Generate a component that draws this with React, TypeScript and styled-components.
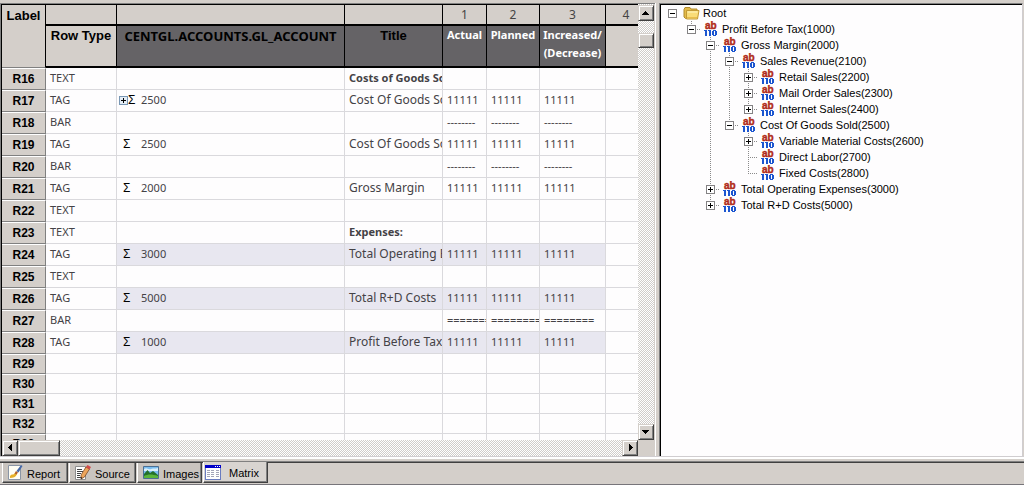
import React from "react";
import styled, { createGlobalStyle, css } from "styled-components";

const face = "#d4cfca";
const sans = '"Liberation Sans", Arial, sans-serif';
const noto = '"Noto Sans", "Open Sans", sans-serif';

const GlobalStyle = createGlobalStyle`
  *, *::before, *::after { box-sizing: border-box; }
  body { margin: 0; background: ${face}; font-family: ${sans}; font-size: 11px; color: #000; }
  button { font: inherit; color: inherit; margin: 0; padding: 0; border-radius: 0; }
`;

const Page = styled.div`
  display: flex;
  flex-direction: column;
  height: 100vh;
  padding-top: 3px;
  background: ${face};
`;

const Work = styled.main`
  flex: 1;
  min-height: 0;
  display: grid;
  grid-template-columns: minmax(0, 655fr) minmax(0, 369fr);
  grid-template-rows: minmax(0, 1fr);
`;

const GridPane = styled.section`
  display: grid;
  grid-template-columns: minmax(0, 1fr) 17px;
  grid-template-rows: minmax(0, 1fr) 16px;
  border-left: 1px solid #808080;
  border-top: 1px solid #808080;
`;

const GridView = styled.div`
  overflow: hidden;
  border-left: 1px solid #000;
  border-top: 1px solid #000;
  background: #fefdfe;
`;

const Table = styled.table`
  table-layout: fixed;
  width: 100%;
  min-width: 645px;
  border-collapse: separate;
  border-spacing: 0;
`;

const Col = styled.col<{ $w?: number }>`
  width: ${(p) => (p.$w ? `${p.$w}px` : "auto")};
`;

const headBase = css`
  padding: 0;
  overflow: hidden;
  white-space: nowrap;
  vertical-align: top;
  border-right: 1px solid #000;
  border-bottom: 2px solid #000;
  background: ${face};
`;

const ColNumber = styled.th`
  ${headBase}
  height: 21px;
  vertical-align: middle;
  font: 400 12px/16px ${noto};
  color: #444;
`;

const CornerHead = styled.th`
  ${headBase}
  height: 63px;
  border-bottom: 1px solid #808080;
  padding-top: 2px;
  font: 700 13px/18px ${sans};
`;

const FieldHead = styled.th<{ $dark?: boolean; $light?: boolean; $noto?: boolean }>`
  ${headBase}
  height: 42px;
  padding-top: ${(p) => (p.$light ? 0 : 1)}px;
  font: 700 ${(p) => (p.$light ? 11 : 13)}px/18px ${(p) => (p.$light || p.$noto ? noto : sans)};
  color: ${(p) => (p.$light ? "#fff" : "#000")};
  background: ${(p) => (p.$dark ? "#656366" : face)};
  white-space: pre-line;
`;

const RowHead = styled.th`
  padding: 0 0 1px;
  border: 1px solid #808080;
  border-top-color: #fff;
  border-left: 0;
  background: ${face};
  font: 700 12px/16px ${sans};
`;

const Cell = styled.td<{ $shade?: boolean; $bold?: boolean; $size?: number }>`
  padding: 0 0 1px 4px;
  border-right: 1px solid #dad9dd;
  border-bottom: 1px solid #dad9dd;
  background: ${(p) => (p.$shade ? "#e8e7f0" : "#fefdfe")};
  font: ${(p) => (p.$bold ? 700 : 400)} ${(p) => p.$size ?? 11}px/16px ${noto};
  color: #444246;
  white-space: nowrap;
  overflow: hidden;
`;

const Row = styled.tr<{ $empty: boolean }>`
  height: ${(p) => (p.$empty ? 20 : 22)}px;
`;

const Account = styled.div`
  display: flex;
  align-items: center;
`;

const AccountIcons = styled.span<{ $plus?: boolean }>`
  display: flex;
  align-items: center;
  flex: none;
  width: ${(p) => (p.$plus ? 22 : 20)}px;
  margin-left: ${(p) => (p.$plus ? -2 : 0)}px;
  padding-left: ${(p) => (p.$plus ? 0 : 2)}px;
`;

const Expander = styled.button`
  display: flex;
  width: 9px;
  height: 9px;
  border: 0;
  background: none;
  flex: none;
`;

const Sigma = styled.span`
  font: 400 12px/16px ${sans};
  color: #000;
`;

const checker = css`
  background: repeating-conic-gradient(#d0cdca 0 25%, #fff 0 50%) 0 0 / 2px 2px;
`;

const VBar = styled.div`
  display: flex;
  flex-direction: column;
  min-height: 0;
  padding-top: 1px;
  border-right: 1px solid ${face};
  ${checker}
`;

const HBar = styled.div`
  display: flex;
  border-left: 1px solid #000;
  ${checker}
`;

const bevel = css`
  border: 1px solid;
  border-color: ${face} #404040 #404040 ${face};
  box-shadow: inset 1px 1px #fff, inset -1px -1px #808080;
  background: ${face};
`;

const ArrowButton = styled.button`
  ${bevel}
  width: 16px;
  height: 16px;
  flex: none;
  display: flex;
  align-items: center;
  justify-content: center;
`;

const Thumb = styled.div<{ $w: number; $h: number }>`
  ${bevel}
  width: ${(p) => p.$w}px;
  height: ${(p) => p.$h}px;
  flex: none;
`;

const Gap = styled.div<{ $size?: number }>`
  flex: ${(p) => (p.$size ? `0 0 ${p.$size}px` : "1")};
`;

const TreePane = styled.aside`
  display: flex;
  min-width: 0;
  border-left: 1px solid #fff;
  padding-left: 3px;
  padding-right: 1px;
`;

const TreeView = styled.ul`
  flex: 1;
  min-width: 0;
  overflow: hidden;
  margin: 0;
  padding: 1px 0 0 3px;
  list-style: none;
  border-left: 1px solid #808080;
  border-top: 1px solid #808080;
  border-right: 1px solid #d0cdd0;
  box-shadow: inset 1px 1px #000;
  background: #fefdfe;
`;

const TreeRow = styled.li`
  display: flex;
  height: 16px;
  line-height: 16px;
  white-space: nowrap;
`;

const dotsV = "repeating-linear-gradient(#8a8a8a 0 1px, transparent 1px 2px)";
const dotsH = "repeating-linear-gradient(90deg, #8a8a8a 0 1px, transparent 1px 2px)";

const Guide = styled.span<{ $on?: boolean }>`
  width: 19px;
  flex: none;
  background: ${(p) => (p.$on ? `${dotsV} 9px 0 / 1px 100% no-repeat` : "none")};
`;

const ToggleCell = styled.span<{ $root?: boolean; $last?: boolean }>`
  width: 19px;
  flex: none;
  display: flex;
  align-items: center;
  justify-content: center;
  ${(p) =>
    !p.$root &&
    css`
      background: ${dotsV} 9px 0 / 1px ${p.$last ? "8px" : "100%"} no-repeat,
        ${dotsH} 9px 8px / 10px 1px no-repeat;
    `}
`;

const Toggle = styled.button`
  display: flex;
  width: 9px;
  height: 9px;
  border: 0;
  background: #fff;
`;

const NodeIcon = styled.span`
  width: 19px;
  flex: none;
  display: flex;
  justify-content: center;
  align-items: center;
`;

const NodeLabel = styled.span`
  padding-left: 2px;
`;

const Seam = styled.div`
  height: 7px;
  flex: none;
  border-top: 1px solid #d0cdd0;
  border-bottom: 1px solid #404040;
  background: linear-gradient(#fff 0 2px, ${face} 2px 4px, #808080 4px 5px);
`;

const TabStrip = styled.nav`
  display: flex;
  flex: none;
  height: 22px;
  padding: 0 0 1px 2px;
  border-bottom: 1px solid #77757a;
`;

const Tab = styled.button<{ $active?: boolean; $w: number }>`
  display: flex;
  align-items: center;
  gap: 4px;
  width: ${(p) => p.$w}px;
  height: ${(p) => (p.$active ? 21 : 20)}px;
  margin-top: ${(p) => (p.$active ? -1 : 0)}px;
  margin-right: ${(p) => (p.$active ? 0 : 1)}px;
  padding-left: ${(p) => (p.$active ? 1 : 5)}px;
  border: 0;
  border-left: 1px solid #fff;
  border-right: 1px solid #404040;
  border-bottom: 1px solid #404040;
  box-shadow: inset -1px -1px #808080;
  background: ${(p) => (p.$active ? "#d8d4d0" : "#c9c4bf")};
  white-space: nowrap;
`;

const TabText = styled.span<{ $pad?: boolean }>`
  padding-left: ${(p) => (p.$pad ? 4 : 0)}px;
  padding-top: 2px;
`;

const Arrow = ({ d }: { d: string }) => (
  <svg width="8" height="8" viewBox="0 0 8 8" shapeRendering="crispEdges">
    <path d={d} fill="#000" />
  </svg>
);
const arrows = {
  up: "M3 2h1v1h1v1h1v1h1v1H0V5h1V4h1V3h1z",
  down: "M0 2h7v1H6v1H5v1H4v1H3V5H2V4H1V3H0z",
  left: "M2 3h1V2h1V1h1V0h1v7H5V6H4V5H3V4H2z",
  right: "M3 0h1v1h1v1h1v1h1v1H6v1H5v1H4v1H3z",
};

const PlusMinus = ({ plus, blue }: { plus?: boolean; blue?: boolean }) => (
  <svg width="9" height="9" viewBox="0 0 9 9" shapeRendering="crispEdges">
    <rect x="0.5" y="0.5" width="8" height="8" fill={blue ? "#e4edf6" : "#fff"} stroke={blue ? "#7896b4" : "#848284"} />
    <path d={plus ? "M2 4h5v1H2zM4 2h1v5H4z" : "M2 4h5v1H2z"} fill="#000" />
  </svg>
);

const FolderIcon = () => (
  <svg width="17" height="14" viewBox="0 0 17 14">
    <path d="M1 3.5 2 1.5h5l1 1.500h6v9.500H2.500L1 11z" fill="#e3ba48" stroke="#b08a2c" />
    <path d="M3.500 4.500h12.500L14.500 13h-11z" fill="#f9dc78" stroke="#c39a36" />
    <path d="M4.500 6h10" stroke="#fff6c4" />
    <path d="M4 11.500h10" stroke="#e9bd4c" />
  </svg>
);

const FieldIcon = () => (
  <svg width="13" height="16" viewBox="0 0 13 16" fontFamily="Liberation Sans, Arial, sans-serif" fontWeight="700">
    <text x="1" y="8" fontSize="10" fill="#b02a18" stroke="#b02a18" strokeWidth="0.4">ab</text>
    <g fill="#1c56d0" shapeRendering="crispEdges">
      <path d="M0 9h3v6H1v-5H0zM4 9h3v6H5v-5H4z" />
      <path fillRule="evenodd" d="M9 9h3v1h1v4h-1v1H9v-1H8v-4h1zM10 10v4h1v-4z" />
    </g>
  </svg>
);

const ReportIcon = () => (
  <svg width="15" height="15" viewBox="0 0 15 15">
    <path d="M0.500 0.500h12v14H0.500z" fill="#fffef4" stroke="#8a95a5" />
    <path d="M2 11c2-3 3 0 5-3l2 1c-1 3-4 4-7 4z" fill="#e6b029" />
    <path d="M6.500 8.500 8 6l2 1.500-1.500 2z" fill="#b45f25" />
    <path d="M8.500 6 13 0l1.500 1-4 6.500z" fill="#4568a8" />
  </svg>
);

const SourceIcon = () => (
  <svg width="16" height="15" viewBox="0 0 16 15">
    <path d="M0.500 1.500h10v13h-10z" fill="#fff" stroke="#8d8d8d" />
    <path d="M2 4.500h5M2 6.500h6M2 8.500h4M2 10.500h3M2 12.500h4" stroke="#444" />
    <path d="M6 14V10l5-8 3.500 2-5 8z" fill="#eda55b" stroke="#7c4b2a" strokeWidth="0.8" />
    <path d="m11 2 1.500-2 3.500 2-1.500 2.500z" fill="#d24848" />
    <path d="M6 14v-2l1.500 1z" fill="#222" />
  </svg>
);

const ImagesIcon = () => (
  <svg width="16" height="13" viewBox="0 0 16 13">
    <path d="M0.500 0.500h15v12h-15z" fill="#79bdf0" stroke="#4b6f92" />
    <path d="M1 3c3-2 4 1 7 0s4 0 7-1v3H1z" fill="#d9effb" />
    <path d="M1 8 4.500 4 7 7l3-2 5 4v3H1z" fill="#23702c" />
    <path d="M1 10c4-2 8-2 14 0v2H1z" fill="#5ab53a" />
  </svg>
);

const MatrixIcon = () => (
  <svg width="16" height="15" viewBox="0 0 16 15" shapeRendering="crispEdges">
    <path d="M0 0h16v15H0z" fill="#6a7cc0" />
    <path d="M0 0h16v3H0z" fill="#0000c8" />
    <path d="M1 3h14v11H1z" fill="#fff" />
    <path d="M10 1h1v1h-1zM12 1h1v1h-1zM14 1h1v1h-1z" fill="#fff" />
    <path d="M2 5.500h3M6 5.500h3M11 5.500h3M2 7.500h3M6 7.500h3M11 7.500h3M2 9.500h3M6 9.500h3M11 9.500h3M2 11.500h3M6 11.500h3M11 11.500h3" stroke="#a3a5b8" />
  </svg>
);

type RowData = { type?: string; code?: string; plus?: boolean; title?: string; bold?: boolean; value?: string; shade?: boolean };
const tag = (code: string, title: string, extra: Partial<RowData> = {}): RowData => ({ type: "TAG", code, title, value: "11111", ...extra });

const rows: RowData[] = [
  { type: "TEXT", title: "Costs of Goods Sold", bold: true },
  tag("2500", "Cost Of Goods Sold", { plus: true }),
  { type: "BAR", value: "--------" },
  tag("2500", "Cost Of Goods Sold"),
  { type: "BAR", value: "--------" },
  tag("2000", "Gross Margin"),
  { type: "TEXT" },
  { type: "TEXT", title: "Expenses:", bold: true },
  tag("3000", "Total Operating Expenses", { shade: true }),
  { type: "TEXT" },
  tag("5000", "Total R+D Costs", { shade: true }),
  { type: "BAR", value: "========" },
  tag("1000", "Profit Before Tax", { shade: true }),
  {}, {}, {}, {}, {},
];

type Node = { label: string; closed?: boolean; children?: Node[] };
const tree: Node = {
  label: "Root",
  children: [
    {
      label: "Profit Before Tax(1000)",
      children: [
        {
          label: "Gross Margin(2000)",
          children: [
            {
              label: "Sales Revenue(2100)",
              children: [
                { label: "Retail Sales(2200)", closed: true },
                { label: "Mail Order Sales(2300)", closed: true },
                { label: "Internet Sales(2400)", closed: true },
              ],
            },
            {
              label: "Cost Of Goods Sold(2500)",
              children: [
                { label: "Variable Material Costs(2600)", closed: true },
                { label: "Direct Labor(2700)" },
                { label: "Fixed Costs(2800)" },
              ],
            },
          ],
        },
        { label: "Total Operating Expenses(3000)", closed: true },
        { label: "Total R+D Costs(5000)", closed: true },
      ],
    },
  ],
};

function TreeBranch({ node, guides, root, last }: { node: Node; guides: boolean[]; root?: boolean; last: boolean }) {
  const kids = node.children ?? [];
  return (
    <>
      <TreeRow>
        {guides.map((on, i) => (
          <Guide key={i} $on={on} />
        ))}
        <ToggleCell $root={root} $last={last}>
          {(node.closed || kids.length > 0) && (
            <Toggle aria-label={node.label} aria-expanded={!node.closed}>
              <PlusMinus plus={node.closed} />
            </Toggle>
          )}
        </ToggleCell>
        <NodeIcon>{root ? <FolderIcon /> : <FieldIcon />}</NodeIcon>
        <NodeLabel>{node.label}</NodeLabel>
      </TreeRow>
      {kids.map((kid, i) => (
        <TreeBranch key={kid.label} node={kid} guides={[...guides, !root && !last]} last={i === kids.length - 1} />
      ))}
    </>
  );
}

export default function App() {
  return (
    <Page>
      <GlobalStyle />
      <Work>
        <GridPane>
          <GridView>
            <Table>
              <colgroup>
                <Col $w={44} />
                <Col $w={71} />
                <Col $w={228} />
                <Col $w={98} />
                <Col $w={44} />
                <Col $w={53} />
                <Col $w={66} />
                <Col />
              </colgroup>
              <thead>
                <tr>
                  <CornerHead rowSpan={2}>Label</CornerHead>
                  <ColNumber />
                  <ColNumber />
                  <ColNumber />
                  <ColNumber>1</ColNumber>
                  <ColNumber>2</ColNumber>
                  <ColNumber>3</ColNumber>
                  <ColNumber>4</ColNumber>
                </tr>
                <tr>
                  <FieldHead>Row Type</FieldHead>
                  <FieldHead $dark $noto>CENTGL.ACCOUNTS.GL_ACCOUNT</FieldHead>
                  <FieldHead $dark>Title</FieldHead>
                  <FieldHead $dark $light>Actual</FieldHead>
                  <FieldHead $dark $light>Planned</FieldHead>
                  <FieldHead $dark $light>{"Increased/\n(Decrease)"}</FieldHead>
                  <FieldHead />
                </tr>
              </thead>
              <tbody>
                {rows.map((r, i) => (
                  <Row key={i} $empty={!r.type}>
                    <RowHead>R{16 + i}</RowHead>
                    <Cell>{r.type}</Cell>
                    <Cell $shade={r.shade}>
                      {r.code && (
                        <Account>
                          <AccountIcons $plus={r.plus}>
                            {r.plus && (
                              <Expander aria-label="Expand">
                                <PlusMinus plus blue />
                              </Expander>
                            )}
                            <Sigma>Σ</Sigma>
                          </AccountIcons>
                          <span>{r.code}</span>
                        </Account>
                      )}
                    </Cell>
                    <Cell $shade={r.shade} $bold={r.bold} $size={r.bold ? 11 : 12}>{r.title}</Cell>
                    <Cell $shade={r.shade}>{r.value}</Cell>
                    <Cell $shade={r.shade}>{r.value}</Cell>
                    <Cell $shade={r.shade}>{r.value}</Cell>
                    <Cell />
                  </Row>
                ))}
              </tbody>
            </Table>
          </GridView>
          <VBar>
            <ArrowButton aria-label="Scroll up"><Arrow d={arrows.up} /></ArrowButton>
            <Gap $size={12} />
            <Thumb $w={16} $h={15} />
            <Gap />
            <ArrowButton aria-label="Scroll down"><Arrow d={arrows.down} /></ArrowButton>
          </VBar>
          <HBar>
            <ArrowButton aria-label="Scroll left"><Arrow d={arrows.left} /></ArrowButton>
            <Thumb $w={42} $h={16} />
            <Gap />
            <ArrowButton aria-label="Scroll right"><Arrow d={arrows.right} /></ArrowButton>
          </HBar>
        </GridPane>
        <TreePane>
          <TreeView>
            <TreeBranch node={tree} guides={[]} root last />
          </TreeView>
        </TreePane>
      </Work>
      <Seam />
      <TabStrip role="tablist">
        <Tab role="tab" $w={66}><ReportIcon /><TabText>Report</TabText></Tab>
        <Tab role="tab" $w={67}><SourceIcon /><TabText>Source</TabText></Tab>
        <Tab role="tab" $w={65}><ImagesIcon /><TabText>Images</TabText></Tab>
        <Tab role="tab" aria-selected $active $w={65}><MatrixIcon /><TabText $pad>Matrix</TabText></Tab>
      </TabStrip>
    </Page>
  );
}
